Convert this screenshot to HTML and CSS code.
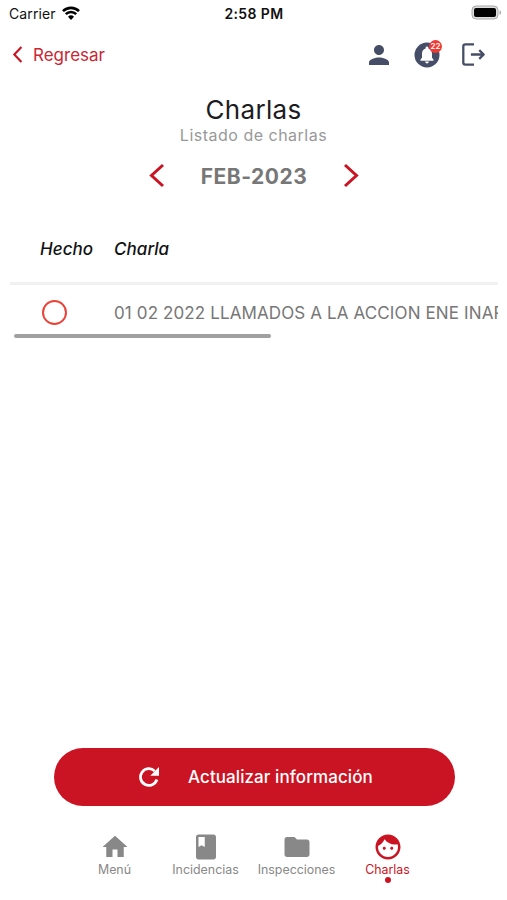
FILE: index.html
```
<!DOCTYPE html>
<html lang="es">
<head>
    <meta charset="UTF-8">
    <meta name="viewport" content="width=device-width, initial-scale=1.0">
    <title>Charlas</title>
    <link rel="stylesheet" href="styles.css">
</head>
<body>
    <div class="status-bar">
        <div class="carrier">
            <span>Carrier</span>
            <svg class="wifi" viewBox="0 0 18 14">
                <path d="M1 5.2a11.3 11.3 0 0 1 16 0M3.8 8.2a7.4 7.4 0 0 1 10.4 0" fill="none" stroke="#000" stroke-width="2.6"/>
                <path d="M9 14l-3-3.2a4.3 4.3 0 0 1 6 0z"/>
            </svg>
        </div>
        <span class="time">2:58 PM</span>
        <svg class="battery" viewBox="0 0 30 15">
            <rect x="1" y="1" width="26" height="13" rx="4" fill="#ddd" stroke="#a9a9a9" stroke-width="1"/>
            <rect x="3" y="3" width="22" height="9" rx="2"/>
            <path d="M28.5 5.2v4.6q1.8-.8 1.8-2.3t-1.8-2.3z" fill="#aaa"/>
        </svg>
    </div>

    <div class="navbar">
        <a class="back">
            <svg class="back-icon" viewBox="0 0 10 16"><path d="M8.7 1L2 8l6.7 7"/></svg>
            <span>Regresar</span>
        </a>
        <div class="actions">
            <svg class="icon" viewBox="0 0 24 24"><path d="M12 12c2.21 0 4-1.79 4-4s-1.79-4-4-4-4 1.79-4 4 1.79 4 4 4zm0 2c-2.67 0-8 1.34-8 4v2h16v-2c0-2.66-5.33-4-8-4z"/></svg>
            <div class="alerts">
                <svg class="icon" viewBox="0 0 24 24">
                    <circle cx="12" cy="12" r="10"/>
                    <path class="bell" d="M12 18.7c-.83 0-1.5-.67-1.5-1.5h3c0 .83-.67 1.5-1.5 1.5zm5.2-2.2H6.8v-1l1.2-1.3v-3.3C8 8.5 9.1 7.2 10.9 6.7v-.5c0-.6.5-1.1 1.1-1.1s1.1.5 1.1 1.1v.5C14.9 7.2 16 8.5 16 10.9v3.3l1.2 1.3z"/>
                </svg>
                <span class="badge">22</span>
            </div>
            <svg class="logout" viewBox="0 0 24 24"><path d="M12.5 2.3H4.2q-2 0-2 2v15.4q0 2 2 2h8.3M9.5 12h12.3M17.5 7.8l4.3 4.2-4.3 4.2"/></svg>
        </div>
    </div>

    <div class="heading">
        <h1>Charlas</h1>
        <p>Listado de charlas</p>
    </div>

    <div class="month">
        <svg class="arrow" viewBox="0 0 16 24"><path d="M14 1.5L2.5 12 14 22.5"/></svg>
        <span class="month-name">FEB-2023</span>
        <svg class="arrow" viewBox="0 0 16 24"><path d="M2 1.5L13.5 12 2 22.5"/></svg>
    </div>

    <div class="table">
        <div class="row table-head">
            <span class="done">Hecho</span>
            <span>Charla</span>
        </div>
        <div class="row table-item">
            <span class="done"><span class="circle"></span></span>
            <span>01 02 2022 LLAMADOS A LA ACCION ENE INAR</span>
        </div>
        <div class="scrollbar"></div>
    </div>

    <button class="button">
        <svg class="icon" viewBox="0 0 24 24">
            <path d="M18.3 14A6.7 6.7 0 1 1 16.6 7.3" fill="none" stroke="currentColor" stroke-width="2.2"/>
            <path d="M20 4v7h-7z"/>
        </svg>
        <span>Actualizar información</span>
    </button>

    <div class="tabs">
        <a class="tab">
            <svg class="icon" viewBox="0 0 24 24"><path d="M10 20v-6h4v6h5v-8h3L12 3 2 12h3v8z"/></svg>
            <span>Menú</span>
        </a>
        <a class="tab">
            <svg class="icon" viewBox="0 0 24 24"><path d="M18 2H6c-1.1 0-2 .9-2 2v16c0 1.1.9 2 2 2h12c1.1 0 2-.9 2-2V4c0-1.1-.9-2-2-2zM6 4h5v8l-2.5-1.5L6 12V4z"/></svg>
            <span>Incidencias</span>
        </a>
        <a class="tab">
            <svg class="icon" viewBox="0 0 24 24"><path d="M10 4H4c-1.1 0-1.99.9-1.99 2L2 18c0 1.1.9 2 2 2h16c1.1 0 2-.9 2-2V8c0-1.1-.9-2-2-2h-8l-2-2z"/></svg>
            <span>Inspecciones</span>
        </a>
        <a class="tab active">
            <svg class="icon" viewBox="0 0 24 24"><path d="M9 11.75c-.69 0-1.25.56-1.25 1.25s.56 1.25 1.25 1.25 1.25-.56 1.25-1.25-.56-1.25-1.25-1.25zm6 0c-.69 0-1.25.56-1.25 1.25s.56 1.25 1.25 1.25 1.25-.56 1.25-1.25-.56-1.25-1.25-1.25zM12 2C6.48 2 2 6.48 2 12s4.48 10 10 10 10-4.48 10-10S17.52 2 12 2zm0 18c-4.41 0-8-3.59-8-8 0-.29.02-.58.05-.86 2.36-1.05 4.23-2.98 5.21-5.37C11.07 8.33 14.05 10 17.42 10c.78 0 1.53-.09 2.25-.26.21.71.33 1.47.33 2.26 0 4.41-3.59 8-8 8z"/></svg>
            <span>Charlas</span>
            <i class="dot"></i>
        </a>
    </div>
</body>
</html>
```
FILE: styles.css
```
* {
    box-sizing: border-box;
}
body {
    font-family: Inter, 'Liberation Sans', sans-serif;
    background-color: white;
    margin: 0;
    height: 900px;
    display: flex;
    flex-direction: column;
    overflow: hidden;
}
svg {
    display: block;
    flex: none;
}
.icon {
    width: 30px;
    height: 30px;
    fill: currentColor;
}
.status-bar {
    display: grid;
    grid-template-columns: 1fr auto 1fr;
    align-items: center;
    height: 27px;
    padding: 0 6px 0 9px;
    font-size: 14px;
    color: #111;
}
.carrier {
    display: flex;
    align-items: center;
    gap: 6px;
    letter-spacing: 0.1px;
}
.wifi {
    width: 18px;
    height: 14px;
    margin-bottom: 2px;
}
.time {
    margin-right: 2px;
    font-weight: 600;
    letter-spacing: 0.4px;
}
.battery {
    width: 30px;
    height: 15px;
    margin-bottom: 2px;
    justify-self: end;
}
.navbar {
    display: flex;
    align-items: center;
    justify-content: space-between;
    height: 55px;
    padding: 0 21px 0 12px;
}
.back {
    display: flex;
    align-items: center;
    gap: 10px;
    color: #cb2733;
    font-size: 17px;
}
.back-icon {
    width: 11px;
    height: 17px;
    fill: none;
    stroke: #cb1423;
    stroke-width: 2;
}
.actions {
    display: flex;
    align-items: center;
    gap: 18px;
    color: #464d66;
}
.alerts {
    position: relative;
    margin-right: 1px;
}
.bell {
    fill: white;
}
.badge {
    position: absolute;
    top: 0;
    right: 0;
    width: 13px;
    height: 13px;
    border-radius: 50%;
    background: #f03a33;
    color: white;
    font-size: 8px;
    font-weight: 600;
    line-height: 13px;
    text-align: center;
}
.logout {
    width: 25px;
    height: 25px;
    fill: none;
    stroke: #464d66;
    stroke-width: 2.2;
    stroke-linejoin: round;
}
.heading {
    text-align: center;
    padding-top: 12px;
}
h1 {
    margin: 0;
    font-size: 26px;
    font-weight: 400;
    line-height: 32px;
    letter-spacing: 0.3px;
    color: #1c1c1e;
}
.heading p {
    margin: 0;
    font-size: 16px;
    line-height: 19px;
    letter-spacing: 0.5px;
    color: #999;
}
.month {
    display: flex;
    align-items: center;
    justify-content: center;
    gap: 36px;
    height: 61px;
    padding-left: 1px;
}
.arrow {
    width: 16px;
    height: 25px;
    fill: none;
    stroke: #cb1423;
    stroke-width: 3;
}
.month-name {
    padding-top: 2px;
    font-size: 21px;
    font-weight: 700;
    letter-spacing: 0.5px;
    color: #777;
}
.table {
    margin: 8px 9px 0 10px;
    overflow: hidden;
}
.row {
    display: flex;
    align-items: center;
    white-space: nowrap;
}
.done {
    flex: none;
    width: 104px;
    padding-left: 30px;
}
.table-head {
    height: 71px;
    padding-top: 2px;
    border-bottom: 3px solid #f1f1f1;
    font-size: 17px;
    font-weight: 500;
    font-style: italic;
    letter-spacing: 0.05px;
    color: #111;
}
.table-item {
    height: 49px;
    padding-top: 6px;
    font-size: 17px;
    letter-spacing: 0.12px;
    color: #777;
}
.circle {
    display: block;
    width: 25px;
    height: 25px;
    margin-left: 2px;
    border: 2px solid #eb4337;
    border-radius: 50%;
}
.scrollbar {
    width: 257px;
    height: 4px;
    margin-left: 4px;
    border-radius: 2px;
    background: #a0a0a0;
}
.button {
    display: flex;
    align-items: center;
    gap: 24px;
    width: 401px;
    height: 58px;
    margin: auto auto 0 53.5px;
    padding: 0 80.5px;
    border: none;
    border-radius: 29px;
    background: #cb1423;
    color: white;
    font-family: inherit;
    font-size: 17px;
    font-weight: 500;
    letter-spacing: 0.08px;
    white-space: nowrap;
}
.tabs {
    display: flex;
    height: 94.5px;
    padding: 26.5px 74px 0 69px;
}
.tab {
    display: flex;
    flex-direction: column;
    align-items: center;
    width: 91px;
    font-size: 12.4px;
    line-height: 15px;
    color: #888;
}
.tab.active {
    color: #cb1423;
}
.dot {
    width: 6px;
    height: 6px;
    border-radius: 50%;
    background: #cb1423;
}
```
